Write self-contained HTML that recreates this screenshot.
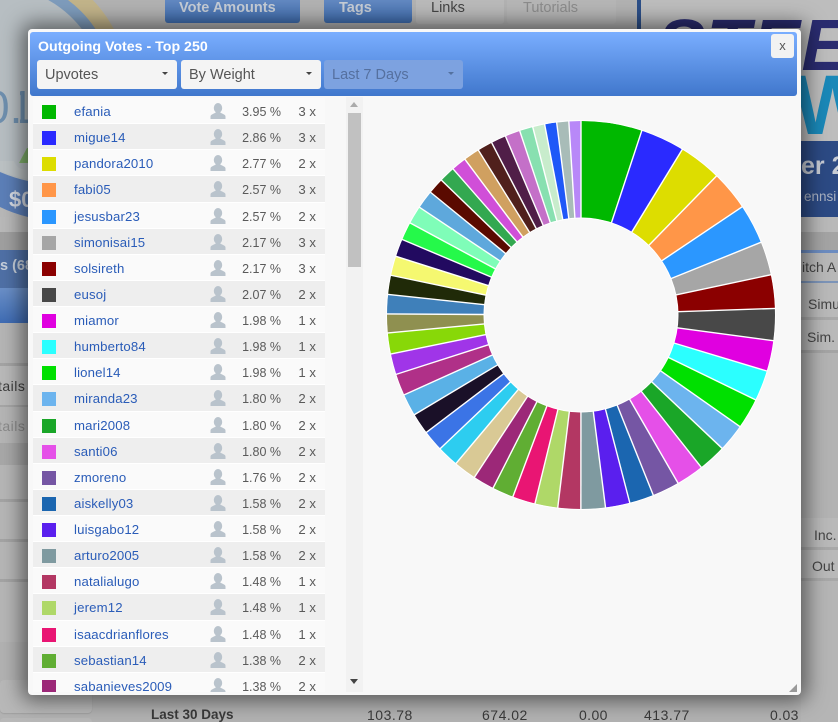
<!DOCTYPE html>
<html><head><meta charset="utf-8"><style>
*{box-sizing:border-box}
html,body{margin:0;padding:0;width:838px;height:722px;overflow:hidden;background:#b2b2b2;font-family:"Liberation Sans",sans-serif}
.a{position:absolute}
#bg{position:absolute;left:0;top:0;width:838px;height:722px;overflow:hidden}
#modal{position:absolute;left:28px;top:29px;width:773px;height:666px;background:#f8f8f8;border-radius:4px;box-shadow:0 0 20px 6px rgba(0,0,0,.5);overflow:hidden}
#head{position:absolute;left:2px;top:3px;width:767px;height:64px;border-radius:3px;background:linear-gradient(#7aaeff,#4077cc)}
#head .t{position:absolute;left:8px;top:6px;color:#fff;font:bold 14.2px/18px "Liberation Sans",sans-serif;white-space:nowrap}
.s{position:absolute;top:28px;width:140px;height:29px;background:#f4f4f4;border-radius:3px;color:#555;font:14.5px/31px "Liberation Sans",sans-serif;padding-left:8px}
.s i{position:absolute;right:9px;top:12px;border:3px solid transparent;border-top:3px solid #444;border-bottom:0}
#list{position:absolute;left:5px;top:69px;width:292px;height:594px;overflow:hidden}
.r{position:relative;height:26.14px;background:#fafafa;border-bottom:1px solid #fff;font-size:12px;color:#555}
.r:nth-child(even){background:#eeeeee}
.r b{position:absolute;left:9px;top:7px;width:14px;height:14px}
.r a{position:absolute;left:41px;top:6px;color:#2a5cb8;font:13.2px "Liberation Sans",sans-serif;letter-spacing:.15px;white-space:nowrap}
.r svg{position:absolute;left:177px;top:5px}
.r u{position:absolute;right:44px;top:6px;text-decoration:none;font:12.5px/16px "Liberation Sans",sans-serif;color:#5a5a5a}
.r em{position:absolute;right:9px;top:6px;font:normal 13.2px "Liberation Sans",sans-serif;color:#5a5a5a}
.bt{font:14px "Liberation Sans",sans-serif;white-space:nowrap;color:#3a3a3a}
</style></head><body>
<svg width="0" height="0" style="position:absolute"><symbol id="p" viewBox="0 0 16 16"><ellipse cx="8" cy="5" rx="4.2" ry="5" fill="#b9c3cc"/><path d="M.5 16V13.5C.5 11 5 10.8 6 9H10C11 10.8 15.5 11 15.5 13.5V16Z" fill="#b9c3cc"/></symbol></svg>
<div id="bg">
 <!-- gauge -->
 <div class="a" style="left:-122px;top:-38px;width:250px;height:250px;border-radius:50%;background:#c2b48a"></div>
 <div class="a" style="left:-112px;top:-22px;width:226px;height:226px;border-radius:50%;background:#7e9cbc"></div>
 <div class="a" style="left:-104px;top:-12px;width:212px;height:240px;border-radius:50%;background:#b7bec2"></div>
 <div class="a" style="left:0;top:200px;width:28px;height:30px;background:#b8b8b8"></div>
 <svg class="a" style="left:0;top:0" width="28" height="222"><path d="M0 172Q14 178 28 181V217Q12 213 0 207Z" fill="#5c7fb8"/><path d="M0 161H14Q17 170 28 170V179Q12 176 0 171Z" fill="#bcc2c4"/><path d="M19 163L27 148 28 148V163Z" fill="#82b46e"/></svg>
 <div class="a" style="left:-16px;top:80px;color:#6e8fae;font:46px 'Liberation Sans',sans-serif">0.</div>
 <div class="a" style="left:20px;top:80px;width:10px;height:60px;overflow:hidden"><span class="a" style="left:-11px;top:0;color:#6e8fae;font:46px 'Liberation Sans',sans-serif">1</span></div>
 <div class="a" style="left:9px;top:187px;color:#d8dde6;font:bold 22px 'Liberation Sans',sans-serif">$0</div>
 <!-- top buttons -->
 <div class="a" style="left:165px;top:-8px;width:135px;height:31px;border-radius:3px;background:linear-gradient(#6f93c8,#3f6cae);color:#c6cdd6;font:bold 14.5px/33px 'Liberation Sans',sans-serif;padding-left:14px">Vote Amounts</div>
 <div class="a" style="left:324px;top:-8px;width:88px;height:31px;border-radius:3px;background:linear-gradient(#6f93c8,#3f6cae);color:#c6cdd6;font:bold 14.5px/33px 'Liberation Sans',sans-serif;padding-left:15px">Tags</div>
 <div class="a" style="left:416px;top:-8px;width:88px;height:32px;background:#bababa;border-radius:3px;color:#444;font:14.5px/33px 'Liberation Sans',sans-serif;padding-left:15px">Links</div>
 <div class="a" style="left:507px;top:-8px;width:109px;height:32px;background:#b6b6b6;border-radius:3px;color:#8c8c8c;font:14.5px/33px 'Liberation Sans',sans-serif;padding-left:16px">Tutorials</div>
 <!-- banner -->
 <div class="a" style="left:637px;top:0;width:201px;height:217px;background:#bdbdbd;overflow:hidden;border-left:4px solid #2c4f88">
  <div class="a" style="left:16px;top:5px;color:#2a2c70;font:italic bold 72px 'Liberation Sans',sans-serif;white-space:nowrap;letter-spacing:1.5px">STEEM</div>
  <div class="a" style="left:152px;top:57px;color:#1a88b8;font:bold 84px 'Liberation Sans',sans-serif">W</div>
  <div class="a" style="left:0;top:141px;width:200px;height:76px;background:#2c4a84"></div>
  <div class="a" style="left:160px;top:152px;color:#c6cbd4;font:bold 25px 'Liberation Sans',sans-serif;white-space:nowrap">er 2</div>
  <div class="a" style="left:163px;top:189px;color:#aab2c2;font:13.5px 'Liberation Sans',sans-serif;white-space:nowrap">ennsi</div>
 </div>
 <!-- left column -->
 <div class="a" style="left:0;top:217px;width:28px;height:16px;background:#b9b9b9"></div>
 <div class="a" style="left:0;top:232px;width:28px;height:18px;background:#a0a0a0"></div>
 <div class="a" style="left:0;top:250px;width:28px;height:38px;background:#4f70a6;color:#c7d0dc;font:bold 14.5px/33px 'Liberation Sans',sans-serif;white-space:nowrap">s (68</div>
 <div class="a" style="left:0;top:288px;width:28px;height:35px;background:linear-gradient(#6b90c8,#3f6cb4)"></div>
 <div class="a" style="left:0;top:323px;width:28px;height:40px;background:#b5b5b5"></div>
 <div class="a" style="left:0;top:363px;width:28px;height:42px;background:#b9b9b9;border-top:3px solid #a4a4a4;color:#3c3c3c;font:14px/41px 'Liberation Sans',sans-serif;white-space:nowrap;overflow:hidden"><span style="margin-left:-2px;letter-spacing:.5px">tails</span></div>
 <div class="a" style="left:0;top:405px;width:28px;height:38px;background:#b5b5b5;border-top:2px solid #a6a6a6;color:#8a8a8a;font:14px/38px 'Liberation Sans',sans-serif;white-space:nowrap;overflow:hidden"><span style="margin-left:-2px;letter-spacing:.5px">tails</span></div>
 <div class="a" style="left:0;top:443px;width:28px;height:22px;background:#a8a8a8"></div>
 <div class="a" style="left:0;top:465px;width:28px;height:37px;background:#b6b6b6;border-bottom:3px solid #a4a4a4"></div>
 <div class="a" style="left:0;top:502px;width:28px;height:40px;background:#b6b6b6;border-bottom:3px solid #a4a4a4"></div>
 <div class="a" style="left:0;top:542px;width:28px;height:40px;background:#b6b6b6;border-bottom:3px solid #a4a4a4"></div>
 <div class="a" style="left:0;top:582px;width:28px;height:60px;background:#b6b6b6"></div>
 <div class="a" style="left:0;top:642px;width:92px;height:37px;background:#b2b2b2;border-radius:4px"></div>
 <div class="a" style="left:0;top:680px;width:92px;height:33px;background:#b8b8b8;border-radius:4px;box-shadow:0 1px 1px #a0a0a0"></div>
 <div class="a" style="left:0;top:718px;width:92px;height:10px;background:#b8b8b8;border-radius:4px"></div>
 <!-- right column -->
 <div class="a" style="left:801px;top:217px;width:37px;height:16px;background:#b9b9b9"></div>
 <div class="a" style="left:801px;top:232px;width:37px;height:18px;background:#a4a4a4"></div>
 <div class="a" style="left:801px;top:250px;width:37px;height:33px;background:#b8b8b8;border-top:3px solid #6c8cc0;border-bottom:2px solid #7c94b8;color:#444;font:14px/28px 'Liberation Sans',sans-serif;white-space:nowrap;overflow:hidden;padding-left:1px">itch A</div>
 <div class="a" style="left:801px;top:283px;width:37px;height:37px;background:#b9b9b9;border-bottom:3px solid #a8a8a8;color:#444;font:14px/42px 'Liberation Sans',sans-serif;overflow:hidden;padding-left:7px;white-space:nowrap">Simu</div>
 <div class="a" style="left:801px;top:320px;width:37px;height:33px;background:#b9b9b9;border-bottom:3px solid #a4a4a4;color:#444;font:14px/34px 'Liberation Sans',sans-serif;overflow:hidden;padding-left:6px;white-space:nowrap">Sim.</div>
 <div class="a" style="left:801px;top:353px;width:37px;height:165px;background:#b3b3b3"></div>
 <div class="a" style="left:801px;top:518px;width:37px;height:32px;background:#b9b9b9;border-bottom:3px solid #a8a8a8;color:#444;font:14px/34px 'Liberation Sans',sans-serif;overflow:hidden;padding-left:13px;white-space:nowrap">Inc.</div>
 <div class="a" style="left:801px;top:550px;width:37px;height:31px;background:#b9b9b9;border-bottom:3px solid #a8a8a8;color:#444;font:14px/32px 'Liberation Sans',sans-serif;overflow:hidden;padding-left:11px;white-space:nowrap">Out</div>
 <div class="a" style="left:801px;top:581px;width:37px;height:141px;background:#b5b5b5"></div>
 <!-- bottom row -->
 <div class="a bt" style="left:151px;top:707px;font-weight:bold;font-size:13.5px">Last 30 Days</div>
 <div class="a bt" style="left:367px;top:707px;letter-spacing:.5px">103.78</div>
 <div class="a bt" style="left:482px;top:707px;letter-spacing:.5px">674.02</div>
 <div class="a bt" style="left:579px;top:707px;letter-spacing:.4px">0.00</div>
 <div class="a bt" style="left:644px;top:707px;letter-spacing:.5px">413.77</div>
 <div class="a bt" style="left:770px;top:707px;letter-spacing:.4px">0.03</div>
</div>

<div id="modal">
 <div id="head">
  <div class="t">Outgoing Votes - Top 250</div>
  <div class="s" style="left:7px">Upvotes<i></i></div>
  <div class="s" style="left:151px">By Weight<i></i></div>
  <div class="s" style="left:294px;width:139px;background:#7da2e0;color:#55709f">Last 7 Days<i style="border-top-color:#53719f"></i></div>
  <div class="a" style="left:741px;top:2px;width:23px;height:24px;background:#f2f2f2;border-radius:3px;color:#555;font:13px/24px 'Liberation Sans',sans-serif;text-align:center">x</div>
 </div>
 <div id="list">
<div class="r"><b style="background:#00b800"></b><a>efania</a><svg width="16" height="16"><use href="#p"/></svg><u>3.95 %</u><em>3 x</em></div>
<div class="r"><b style="background:#2a2aff"></b><a>migue14</a><svg width="16" height="16"><use href="#p"/></svg><u>2.86 %</u><em>3 x</em></div>
<div class="r"><b style="background:#dddd00"></b><a>pandora2010</a><svg width="16" height="16"><use href="#p"/></svg><u>2.77 %</u><em>2 x</em></div>
<div class="r"><b style="background:#ff9648"></b><a>fabi05</a><svg width="16" height="16"><use href="#p"/></svg><u>2.57 %</u><em>3 x</em></div>
<div class="r"><b style="background:#2b97ff"></b><a>jesusbar23</a><svg width="16" height="16"><use href="#p"/></svg><u>2.57 %</u><em>2 x</em></div>
<div class="r"><b style="background:#a6a6a6"></b><a>simonisai15</a><svg width="16" height="16"><use href="#p"/></svg><u>2.17 %</u><em>3 x</em></div>
<div class="r"><b style="background:#8b0000"></b><a>solsireth</a><svg width="16" height="16"><use href="#p"/></svg><u>2.17 %</u><em>3 x</em></div>
<div class="r"><b style="background:#484848"></b><a>eusoj</a><svg width="16" height="16"><use href="#p"/></svg><u>2.07 %</u><em>2 x</em></div>
<div class="r"><b style="background:#e000e0"></b><a>miamor</a><svg width="16" height="16"><use href="#p"/></svg><u>1.98 %</u><em>1 x</em></div>
<div class="r"><b style="background:#2bffff"></b><a>humberto84</a><svg width="16" height="16"><use href="#p"/></svg><u>1.98 %</u><em>1 x</em></div>
<div class="r"><b style="background:#00e000"></b><a>lionel14</a><svg width="16" height="16"><use href="#p"/></svg><u>1.98 %</u><em>1 x</em></div>
<div class="r"><b style="background:#6cb4ee"></b><a>miranda23</a><svg width="16" height="16"><use href="#p"/></svg><u>1.80 %</u><em>2 x</em></div>
<div class="r"><b style="background:#1aa628"></b><a>mari2008</a><svg width="16" height="16"><use href="#p"/></svg><u>1.80 %</u><em>2 x</em></div>
<div class="r"><b style="background:#e550e8"></b><a>santi06</a><svg width="16" height="16"><use href="#p"/></svg><u>1.80 %</u><em>2 x</em></div>
<div class="r"><b style="background:#7556a4"></b><a>zmoreno</a><svg width="16" height="16"><use href="#p"/></svg><u>1.76 %</u><em>2 x</em></div>
<div class="r"><b style="background:#1b66b0"></b><a>aiskelly03</a><svg width="16" height="16"><use href="#p"/></svg><u>1.58 %</u><em>2 x</em></div>
<div class="r"><b style="background:#5a1fee"></b><a>luisgabo12</a><svg width="16" height="16"><use href="#p"/></svg><u>1.58 %</u><em>2 x</em></div>
<div class="r"><b style="background:#7f9aa0"></b><a>arturo2005</a><svg width="16" height="16"><use href="#p"/></svg><u>1.58 %</u><em>2 x</em></div>
<div class="r"><b style="background:#b33763"></b><a>natalialugo</a><svg width="16" height="16"><use href="#p"/></svg><u>1.48 %</u><em>1 x</em></div>
<div class="r"><b style="background:#afd868"></b><a>jerem12</a><svg width="16" height="16"><use href="#p"/></svg><u>1.48 %</u><em>1 x</em></div>
<div class="r"><b style="background:#e91573"></b><a>isaacdrianflores</a><svg width="16" height="16"><use href="#p"/></svg><u>1.48 %</u><em>1 x</em></div>
<div class="r"><b style="background:#60ae33"></b><a>sebastian14</a><svg width="16" height="16"><use href="#p"/></svg><u>1.38 %</u><em>2 x</em></div>
<div class="r"><b style="background:#9c2878"></b><a>sabanieves2009</a><svg width="16" height="16"><use href="#p"/></svg><u>1.38 %</u><em>2 x</em></div>
 </div>
 <!-- scrollbar -->
 <div class="a" style="left:318px;top:68px;width:17px;height:595px;background:#f2f2f2"></div>
 <div class="a" style="left:320px;top:84px;width:13px;height:154px;background:#c1c1c1"></div>
 <div class="a" style="left:322px;top:73px;border:4px solid transparent;border-bottom:5px solid #aaa;border-top:0"></div>
 <div class="a" style="left:322px;top:650px;border:4px solid transparent;border-top:5px solid #444;border-bottom:0"></div>
 <!-- resize grip -->
 <svg class="a" style="left:760px;top:654px" width="10" height="10"><path d="M9 1V9H1Z" fill="#9a9a9a"/></svg>
</div>

<svg class="a" style="left:0;top:0" width="838" height="722" viewBox="0 0 838 722">
<g transform="translate(581 315) rotate(-90)" fill="none" stroke-width="97">
<g>
<circle r="145.75" pathLength="360" stroke="#00b800" stroke-dasharray="18.25 400"/>
<circle r="145.75" pathLength="360" stroke="#2a2aff" stroke-dasharray="13.21 400" transform="rotate(18.25)"/>
<circle r="145.75" pathLength="360" stroke="#dddd00" stroke-dasharray="12.8 400" transform="rotate(31.46)"/>
<circle r="145.75" pathLength="360" stroke="#ff9648" stroke-dasharray="11.87 400" transform="rotate(44.26)"/>
<circle r="145.75" pathLength="360" stroke="#2b97ff" stroke-dasharray="11.87 400" transform="rotate(56.13)"/>
<circle r="145.75" pathLength="360" stroke="#a6a6a6" stroke-dasharray="10.03 400" transform="rotate(68)"/>
<circle r="145.75" pathLength="360" stroke="#8b0000" stroke-dasharray="10.03 400" transform="rotate(78.03)"/>
<circle r="145.75" pathLength="360" stroke="#484848" stroke-dasharray="9.56 400" transform="rotate(88.06)"/>
<circle r="145.75" pathLength="360" stroke="#e000e0" stroke-dasharray="9.15 400" transform="rotate(97.62)"/>
<circle r="145.75" pathLength="360" stroke="#2bffff" stroke-dasharray="9.15 400" transform="rotate(106.77)"/>
<circle r="145.75" pathLength="360" stroke="#00e000" stroke-dasharray="9.14 400" transform="rotate(115.92)"/>
<circle r="145.75" pathLength="360" stroke="#6cb4ee" stroke-dasharray="8.32 400" transform="rotate(125.06)"/>
<circle r="145.75" pathLength="360" stroke="#1aa628" stroke-dasharray="8.32 400" transform="rotate(133.38)"/>
<circle r="145.75" pathLength="360" stroke="#e550e8" stroke-dasharray="8.31 400" transform="rotate(141.7)"/>
<circle r="145.75" pathLength="360" stroke="#7556a4" stroke-dasharray="8.13 400" transform="rotate(150.01)"/>
<circle r="145.75" pathLength="360" stroke="#1b66b0" stroke-dasharray="7.3 400" transform="rotate(158.14)"/>
<circle r="145.75" pathLength="360" stroke="#5a1fee" stroke-dasharray="7.3 400" transform="rotate(165.44)"/>
<circle r="145.75" pathLength="360" stroke="#7f9aa0" stroke-dasharray="7.3 400" transform="rotate(172.74)"/>
<circle r="145.75" pathLength="360" stroke="#b33763" stroke-dasharray="6.84 400" transform="rotate(180.04)"/>
<circle r="145.75" pathLength="360" stroke="#afd868" stroke-dasharray="6.84 400" transform="rotate(186.88)"/>
<circle r="145.75" pathLength="360" stroke="#e91573" stroke-dasharray="6.83 400" transform="rotate(193.72)"/>
<circle r="145.75" pathLength="360" stroke="#60ae33" stroke-dasharray="6.38 400" transform="rotate(200.55)"/>
<circle r="145.75" pathLength="360" stroke="#9c2878" stroke-dasharray="6.37 400" transform="rotate(206.93)"/>
<circle r="145.75" pathLength="360" stroke="#d9c995" stroke-dasharray="6.8 400" transform="rotate(213.3)"/>
<circle r="145.75" pathLength="360" stroke="#2dcdf0" stroke-dasharray="6.4 400" transform="rotate(220.1)"/>
<circle r="145.75" pathLength="360" stroke="#3b74e6" stroke-dasharray="6.3 400" transform="rotate(226.5)"/>
<circle r="145.75" pathLength="360" stroke="#1a1028" stroke-dasharray="6.3 400" transform="rotate(232.8)"/>
<circle r="145.75" pathLength="360" stroke="#5ab1e6" stroke-dasharray="6.6 400" transform="rotate(239.1)"/>
<circle r="145.75" pathLength="360" stroke="#b03088" stroke-dasharray="6.5 400" transform="rotate(245.7)"/>
<circle r="145.75" pathLength="360" stroke="#a035e8" stroke-dasharray="6.2 400" transform="rotate(252.2)"/>
<circle r="145.75" pathLength="360" stroke="#88d808" stroke-dasharray="6.3 400" transform="rotate(258.4)"/>
<circle r="145.75" pathLength="360" stroke="#8f9050" stroke-dasharray="5.6 400" transform="rotate(264.7)"/>
<circle r="145.75" pathLength="360" stroke="#3f80ba" stroke-dasharray="5.8 400" transform="rotate(270.3)"/>
<circle r="145.75" pathLength="360" stroke="#202a08" stroke-dasharray="5.7 400" transform="rotate(276.1)"/>
<circle r="145.75" pathLength="360" stroke="#f5f870" stroke-dasharray="5.8 400" transform="rotate(281.8)"/>
<circle r="145.75" pathLength="360" stroke="#220a60" stroke-dasharray="5.3 400" transform="rotate(287.6)"/>
<circle r="145.75" pathLength="360" stroke="#25f94a" stroke-dasharray="5.4 400" transform="rotate(292.9)"/>
<circle r="145.75" pathLength="360" stroke="#7ffdb8" stroke-dasharray="5.4 400" transform="rotate(298.3)"/>
<circle r="145.75" pathLength="360" stroke="#5ea8dc" stroke-dasharray="5.5 400" transform="rotate(303.7)"/>
<circle r="145.75" pathLength="360" stroke="#5a0a00" stroke-dasharray="4.8 400" transform="rotate(309.2)"/>
<circle r="145.75" pathLength="360" stroke="#33a850" stroke-dasharray="4.8 400" transform="rotate(314)"/>
<circle r="145.75" pathLength="360" stroke="#d04fd8" stroke-dasharray="4.5 400" transform="rotate(318.8)"/>
<circle r="145.75" pathLength="360" stroke="#d0a060" stroke-dasharray="4.8 400" transform="rotate(323.3)"/>
<circle r="145.75" pathLength="360" stroke="#50201c" stroke-dasharray="4.5 400" transform="rotate(328.1)"/>
<circle r="145.75" pathLength="360" stroke="#501e48" stroke-dasharray="4.5 400" transform="rotate(332.6)"/>
<circle r="145.75" pathLength="360" stroke="#c470c8" stroke-dasharray="4.5 400" transform="rotate(337.1)"/>
<circle r="145.75" pathLength="360" stroke="#88e0b0" stroke-dasharray="4 400" transform="rotate(341.6)"/>
<circle r="145.75" pathLength="360" stroke="#c8eccc" stroke-dasharray="3.6 400" transform="rotate(345.6)"/>
<circle r="145.75" pathLength="360" stroke="#1f58f8" stroke-dasharray="3.6 400" transform="rotate(349.2)"/>
<circle r="145.75" pathLength="360" stroke="#a8bcb8" stroke-dasharray="3.6 400" transform="rotate(352.8)"/>
<circle r="145.75" pathLength="360" stroke="#b888f8" stroke-dasharray="3.6 400" transform="rotate(356.4)"/>
</g>
<g stroke="#fff" stroke-width="1.4">
<circle r="194.5" stroke-width="1"/><circle r="97" stroke-width="1"/>
<path d="M97 0H195" transform="rotate(0)"/><path d="M97 0H195" transform="rotate(18.25)"/><path d="M97 0H195" transform="rotate(31.46)"/><path d="M97 0H195" transform="rotate(44.26)"/><path d="M97 0H195" transform="rotate(56.13)"/><path d="M97 0H195" transform="rotate(68)"/><path d="M97 0H195" transform="rotate(78.03)"/><path d="M97 0H195" transform="rotate(88.06)"/><path d="M97 0H195" transform="rotate(97.62)"/><path d="M97 0H195" transform="rotate(106.77)"/><path d="M97 0H195" transform="rotate(115.92)"/><path d="M97 0H195" transform="rotate(125.06)"/><path d="M97 0H195" transform="rotate(133.38)"/><path d="M97 0H195" transform="rotate(141.7)"/><path d="M97 0H195" transform="rotate(150.01)"/><path d="M97 0H195" transform="rotate(158.14)"/><path d="M97 0H195" transform="rotate(165.44)"/><path d="M97 0H195" transform="rotate(172.74)"/><path d="M97 0H195" transform="rotate(180.04)"/><path d="M97 0H195" transform="rotate(186.88)"/><path d="M97 0H195" transform="rotate(193.72)"/><path d="M97 0H195" transform="rotate(200.55)"/><path d="M97 0H195" transform="rotate(206.93)"/><path d="M97 0H195" transform="rotate(213.3)"/><path d="M97 0H195" transform="rotate(220.1)"/><path d="M97 0H195" transform="rotate(226.5)"/><path d="M97 0H195" transform="rotate(232.8)"/><path d="M97 0H195" transform="rotate(239.1)"/><path d="M97 0H195" transform="rotate(245.7)"/><path d="M97 0H195" transform="rotate(252.2)"/><path d="M97 0H195" transform="rotate(258.4)"/><path d="M97 0H195" transform="rotate(264.7)"/><path d="M97 0H195" transform="rotate(270.3)"/><path d="M97 0H195" transform="rotate(276.1)"/><path d="M97 0H195" transform="rotate(281.8)"/><path d="M97 0H195" transform="rotate(287.6)"/><path d="M97 0H195" transform="rotate(292.9)"/><path d="M97 0H195" transform="rotate(298.3)"/><path d="M97 0H195" transform="rotate(303.7)"/><path d="M97 0H195" transform="rotate(309.2)"/><path d="M97 0H195" transform="rotate(314)"/><path d="M97 0H195" transform="rotate(318.8)"/><path d="M97 0H195" transform="rotate(323.3)"/><path d="M97 0H195" transform="rotate(328.1)"/><path d="M97 0H195" transform="rotate(332.6)"/><path d="M97 0H195" transform="rotate(337.1)"/><path d="M97 0H195" transform="rotate(341.6)"/><path d="M97 0H195" transform="rotate(345.6)"/><path d="M97 0H195" transform="rotate(349.2)"/><path d="M97 0H195" transform="rotate(352.8)"/><path d="M97 0H195" transform="rotate(356.4)"/>
</g>
</g>
</svg>
</body></html>
